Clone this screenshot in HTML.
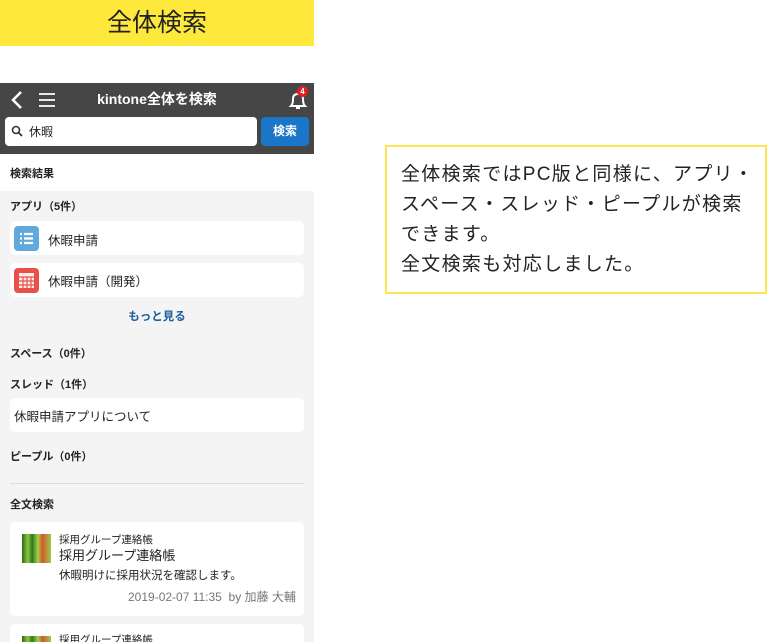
<!DOCTYPE html>
<html><head><meta charset="utf-8"><style>
*{margin:0;padding:0;box-sizing:border-box}
body{width:768px;height:642px;background:#fff;position:relative;overflow:hidden;font-family:"Liberation Sans","Noto Sans CJK JP",sans-serif;color:#222}
.a{position:absolute}
.banner{left:0;top:0;width:314px;height:46px;background:#ffe83c;font-size:25px;text-align:center;line-height:46px;color:#222}
.phone{left:0;top:83px;width:314px;height:559px;background:#f4f4f4;overflow:hidden}
.hdr{left:0;top:0;width:314px;height:71px;background:#464646}
.t{font-size:11px;font-weight:bold;color:#222}
.card{background:#fff;border-radius:5px;left:10px;width:294px}
.callout{left:385px;top:145px;width:382px;height:149px;border:2px solid #ffe54a;background:#fff;padding:13px 0 0 14px;font-size:19px;line-height:30px;color:#222;letter-spacing:1.3px}
</style></head><body>
<div class="a banner">全体検索</div>
<div class="a phone">
 <div class="a hdr">
  <svg class="a" style="left:9px;top:7px" width="16" height="20"><path d="M12 2 L4 10 L12 18" stroke="#fff" stroke-width="2.5" fill="none"/></svg>
  <svg class="a" style="left:39px;top:9px" width="16" height="16"><path d="M0 2H16M0 8H16M0 14H16" stroke="#fff" stroke-width="1.8"/></svg>
  <div class="a" style="left:0;width:314px;top:6px;text-align:center;color:#fff;font-weight:bold;font-size:14px">kintone全体を検索</div>
  <svg class="a" style="left:288px;top:6px" width="20" height="22"><path d="M3 17 Q5 15 5 10 Q5 5 10 5 Q15 5 15 10 Q15 15 17 17 Z" stroke="#fff" stroke-width="2" fill="none"/><path d="M8 19 H12" stroke="#fff" stroke-width="2"/></svg>
  <div class="a" style="left:297px;top:3px;width:11px;height:11px;border-radius:50%;background:#e02020;color:#fff;font-size:8px;font-weight:bold;text-align:center;line-height:11px">4</div>
  <div class="a" style="left:5px;top:34px;width:252px;height:29px;background:#fff;border-radius:4px"></div>
  <svg class="a" style="left:11px;top:42px" width="13" height="13"><circle cx="5" cy="5" r="3.5" stroke="#333" stroke-width="1.6" fill="none"/><path d="M7.5 7.5L11 11" stroke="#333" stroke-width="1.8"/></svg>
  <div class="a" style="left:29px;top:40px;font-size:12px">休暇</div>
  <div class="a" style="left:261px;top:34px;width:48px;height:29px;background:#1a76c8;border-radius:4px;color:#fff;font-size:12px;font-weight:bold;text-align:center;line-height:29px">検索</div>
 </div>
 <div class="a" style="left:0;top:71px;width:314px;height:37px;background:#fff"></div>
 <div class="a t" style="left:10px;top:82px">検索結果</div>
 <div class="a t" style="left:10px;top:115px">アプリ（5件）</div>
 <div class="a card" style="top:138px;height:34px"></div>
 <div class="a" style="left:14px;top:143px;width:25px;height:25px;border-radius:4px;background:#5fa9dd"></div>
 <svg class="a" style="left:18px;top:148px" width="18" height="15"><path d="M2 3H4M6 3H15M2 7.5H4M6 7.5H15M2 12H4M6 12H15" stroke="#fff" stroke-width="2.2"/></svg>
 <div class="a" style="left:48px;top:147px;font-size:12.5px">休暇申請</div>
 <div class="a card" style="top:180px;height:34px"></div>
 <div class="a" style="left:14px;top:185px;width:25px;height:25px;border-radius:4px;background:#e9504a"></div>
 <svg class="a" style="left:18px;top:189px" width="17" height="17"><rect x="1" y="1" width="15" height="15" fill="#fff" opacity=".9"/><path d="M1 5H16M1 9H16M1 13H16M5 5V16M9 5V16M13 5V16" stroke="#e9504a" stroke-width="1.2"/></svg>
 <div class="a" style="left:48px;top:188px;font-size:12.5px">休暇申請（開発）</div>
 <div class="a" style="left:0;width:314px;top:225px;text-align:center;color:#1c5f9e;font-size:11.5px;font-weight:bold">もっと見る</div>
 <div class="a t" style="left:10px;top:262px">スペース（0件）</div>
 <div class="a t" style="left:10px;top:293px">スレッド（1件）</div>
 <div class="a card" style="top:315px;height:34px"></div>
 <div class="a" style="left:14px;top:323px;font-size:12.5px">休暇申請アプリについて</div>
 <div class="a t" style="left:10px;top:365px">ピープル（0件）</div>
 <div class="a" style="left:10px;top:400px;width:294px;height:1px;background:#ddd"></div>
 <div class="a t" style="left:10px;top:413px">全文検索</div>
 <div class="a card" style="top:439px;height:94px"></div>
 <div class="a" style="left:22px;top:451px;width:29px;height:29px;background:linear-gradient(90deg,#2c6a1a 0,#8ec63f 20%,#2e7a20 35%,#a7d04a 55%,#d05a2a 70%,#9fc84a 100%)"></div>
 <div class="a" style="left:59px;top:449px;font-size:10.5px">採用グループ連絡帳</div>
 <div class="a" style="left:59px;top:462px;font-size:13px">採用グループ連絡帳</div>
 <div class="a" style="left:59px;top:484px;font-size:11.5px">休暇明けに採用状況を確認します。</div>
 <div class="a" style="left:128px;top:505px;font-size:12px;color:#777">2019-02-07 11:35&nbsp; by 加藤 大輔</div>
 <div class="a card" style="top:541px;height:40px"></div>
 <div class="a" style="left:22px;top:553px;width:29px;height:29px;background:linear-gradient(90deg,#2c6a1a 0,#8ec63f 20%,#2e7a20 35%,#a7d04a 55%,#d05a2a 70%,#9fc84a 100%)"></div>
 <div class="a" style="left:59px;top:549px;font-size:10.5px">採用グループ連絡帳</div>
</div>
<div class="a callout">全体検索ではPC版と同様に、アプリ・<br>スペース・スレッド・ピープルが検索<br>できます。<br>全文検索も対応しました。</div>
</body></html>
